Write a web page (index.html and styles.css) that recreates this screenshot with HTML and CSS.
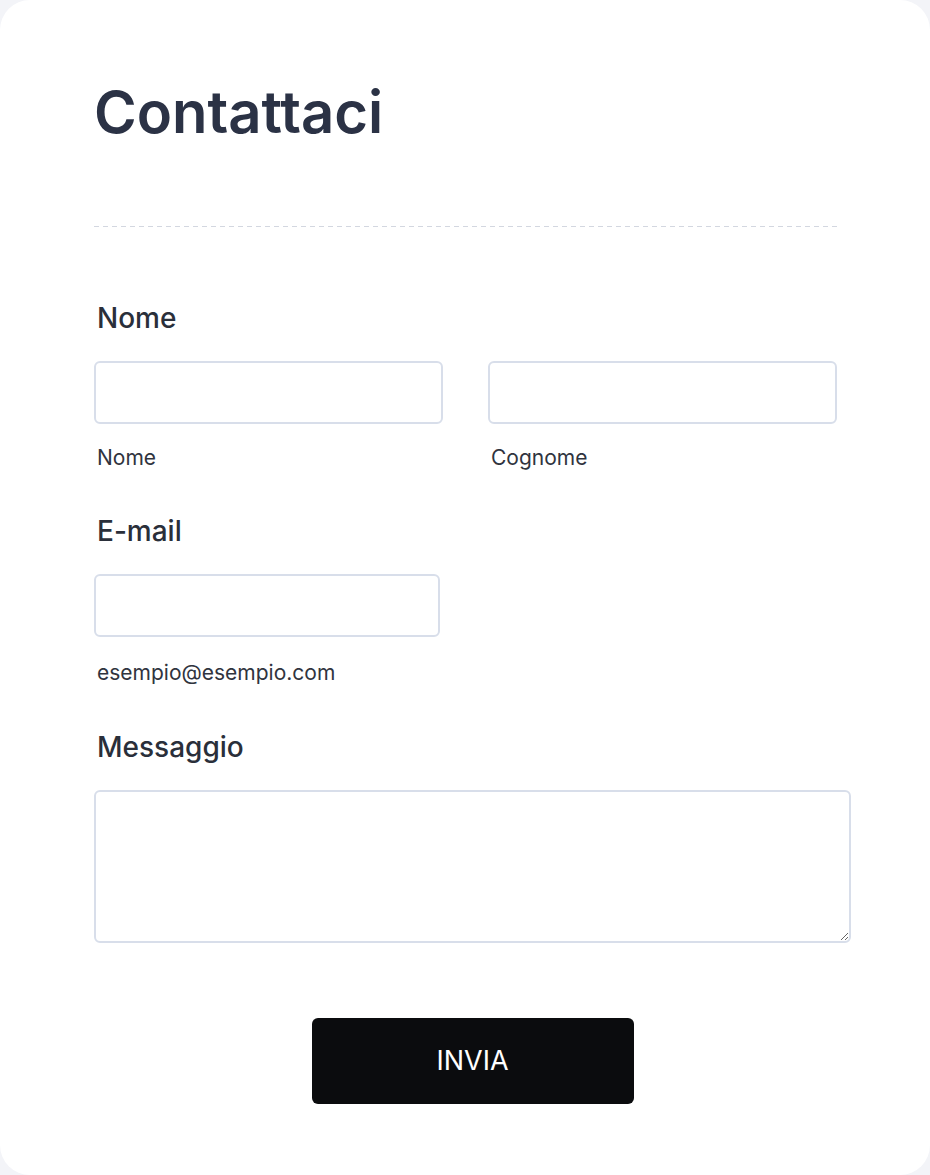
FILE: index.html
```html
<!DOCTYPE html>
<html lang="it">
<head>
    <meta charset="UTF-8">
    <meta name="viewport" content="width=device-width, initial-scale=1.0">
    <title>Contattaci</title>
    <link rel="stylesheet" href="styles.css">
</head>
<body>
    <div class="card">
        <h1 class="title">Contattaci</h1>
        <div class="divider"></div>
        <form class="contact-form">
            <div class="field">
                <label class="field-label">Nome</label>
                <div class="name-row">
                    <div class="sub-field">
                        <input type="text" class="input" id="first-name">
                        <span class="sub-label">Nome</span>
                    </div>
                    <div class="sub-field">
                        <input type="text" class="input" id="last-name">
                        <span class="sub-label">Cognome</span>
                    </div>
                </div>
            </div>
            <div class="field">
                <label class="field-label" for="email">E-mail</label>
                <div class="sub-field email-field">
                    <input type="email" class="input" id="email">
                    <span class="sub-label">esempio@esempio.com</span>
                </div>
            </div>
            <div class="field">
                <label class="field-label" for="message">Messaggio</label>
                <textarea class="textarea" id="message"></textarea>
            </div>
            <div class="actions">
                <button type="submit" class="submit-btn">INVIA</button>
            </div>
        </form>
    </div>
</body>
</html>
```

FILE: styles.css
```css
body {
    margin: 0;
    padding: 0;
    background-color: #f3f4f8;
    font-family: Inter, "Noto Sans", sans-serif;
    color: #2a2f3a;
}

.card {
    background-color: #fff;
    border-radius: 30px;
    min-height: 1175px;
    box-sizing: border-box;
    padding: 78px 79px 0 94px;
}

.title {
    margin: 0;
    font-size: 58px;
    line-height: 1.2;
    font-weight: 600;
    color: #2b3245;
}

.divider {
    width: 743px;
    height: 1px;
    margin-top: 78px;
    background-image: repeating-linear-gradient(to right, #d3d7e0 0, #d3d7e0 5px, transparent 5px, transparent 9px);
}

.contact-form {
    margin-top: 72px;
}

.field {
    margin-bottom: 40px;
}

.field-label {
    display: block;
    font-size: 28px;
    font-weight: 500;
    line-height: 1.4;
    padding-left: 3px;
    margin-bottom: 23px;
    color: #2a2f3a;
}

.name-row {
    display: grid;
    grid-template-columns: 349px 349px;
    column-gap: 45px;
}

.sub-field {
    display: flex;
    flex-direction: column;
}

.email-field {
    width: 346px;
}

.input {
    height: 63px;
    box-sizing: border-box;
    border: 2px solid #d8deea;
    border-radius: 6px;
    background: #fff;
    font-family: inherit;
    font-size: 20px;
    padding: 0 12px;
}

.sub-label {
    margin-top: 19px;
    padding-left: 3px;
    font-size: 21px;
    line-height: 1.4;
    color: #30343e;
}

.email-field .sub-label {
    margin-top: 21px;
}

.textarea {
    display: block;
    width: 757px;
    height: 153px;
    box-sizing: border-box;
    border: 2px solid #d8deea;
    border-radius: 6px;
    font-family: inherit;
    font-size: 20px;
    padding: 12px;
    resize: vertical;
}

.actions {
    width: 757px;
    display: flex;
    justify-content: center;
    margin-top: 75px;
}

.submit-btn {
    width: 322px;
    height: 86px;
    background-color: #0b0c0e;
    color: #fff;
    border: none;
    border-radius: 6px;
    font-family: inherit;
    font-size: 27px;
    cursor: pointer;
}
```
